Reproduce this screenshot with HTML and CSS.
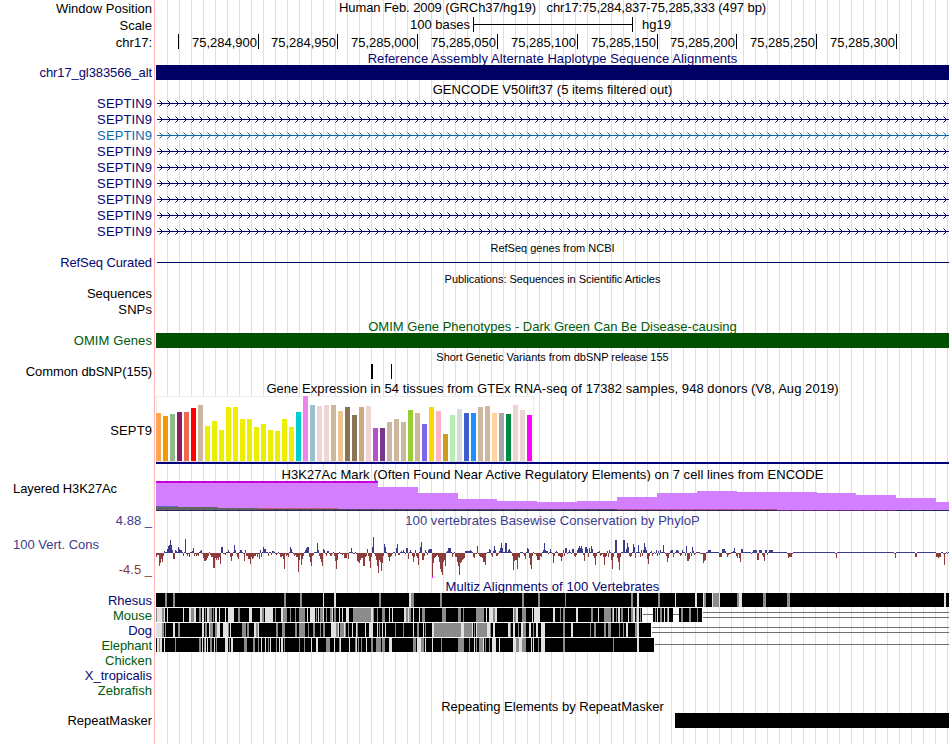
FILE: index.html
```html
<!DOCTYPE html>
<html lang="en">
<head>
<meta charset="utf-8">
<title>Genome Browser chr17:75,284,837-75,285,333</title>
<link rel="stylesheet" href="styles.css">
</head>
<body>
<main class="browser">
  <div class="row h17"><div class="label">Window Position</div><div class="track"><p class="title t-window">Human Feb. 2009 (GRCh37/hg19) &nbsp; chr17:75,284,837-75,285,333 (497 bp)</p></div></div>
  <div class="row h17"><div class="label">Scale</div><div class="track scale"><span class="scale-text">100 bases</span><span class="scale-bar"></span><span class="scale-db">hg19</span></div></div>
  <div class="row h17"><div class="label">chr17:</div><div class="track ruler"><span></span><span>75,284,900</span><span>75,284,950</span><span>75,285,000</span><span>75,285,050</span><span>75,285,100</span><span>75,285,150</span><span>75,285,200</span><span>75,285,250</span><span>75,285,300</span></div></div>

  <div class="row h14"><div class="label"></div><div class="track"><p class="title navy t-alt">Reference Assembly Alternate Haplotype Sequence Alignments</p></div></div>
  <div class="row h15"><div class="label navy tight">chr17_gl383566_alt</div><div class="track"><div class="bar bar-navy"></div></div></div>

  <div class="row h15"><div class="label"></div><div class="track"><p class="title low t-gencode">GENCODE V50lift37 (5 items filtered out)</p></div></div>
  <div class="row h16"><div class="label navy wide">SEPTIN9</div><div class="track gene navy"></div></div>
  <div class="row h16"><div class="label navy wide">SEPTIN9</div><div class="track gene navy"></div></div>
  <div class="row h16"><div class="label teal wide">SEPTIN9</div><div class="track gene teal"></div></div>
  <div class="row h16"><div class="label navy wide">SEPTIN9</div><div class="track gene navy"></div></div>
  <div class="row h16"><div class="label navy wide">SEPTIN9</div><div class="track gene navy"></div></div>
  <div class="row h16"><div class="label navy wide">SEPTIN9</div><div class="track gene navy"></div></div>
  <div class="row h16"><div class="label navy wide">SEPTIN9</div><div class="track gene navy"></div></div>
  <div class="row h16"><div class="label navy wide">SEPTIN9</div><div class="track gene navy"></div></div>
  <div class="row h16"><div class="label navy wide">SEPTIN9</div><div class="track gene navy"></div></div>

  <div class="row h15"><div class="label"></div><div class="track"><p class="title small low t-refseq">RefSeq genes from NCBI</p></div></div>
  <div class="row h16"><div class="label navy tight">RefSeq Curated</div><div class="track"><div class="line"></div></div></div>
  <div class="row h15"><div class="label"></div><div class="track"><p class="title small low t-pubs">Publications: Sequences in Scientific Articles</p></div></div>
  <div class="row h16"><div class="label">Sequences</div><div class="track"></div></div>
  <div class="row h16"><div class="label wide">SNPs</div><div class="track"></div></div>
  <div class="row h16"><div class="label"></div><div class="track"><p class="title green low t-omim">OMIM Gene Phenotypes - Dark Green Can Be Disease-causing</p></div></div>
  <div class="row h15"><div class="label green wide">OMIM Genes</div><div class="track"><div class="bar bar-green"></div></div></div>
  <div class="row h15"><div class="label"></div><div class="track"><p class="title small low t-snp">Short Genetic Variants from dbSNP release 155</p></div></div>
  <div class="row h16"><div class="label tight">Common dbSNP(155)</div><div class="track" id="snp"></div></div>
  <div class="row h17"><div class="label"></div><div class="track"><p class="title low t-gtex">Gene Expression in 54 tissues from GTEx RNA-seq of 17382 samples, 948 donors (V8, Aug 2019)</p></div></div>
  <div class="row h69"><div class="label wide">SEPT9</div><div class="track" id="gtex"></div></div>
  <div class="row h16"><div class="label"></div><div class="track"><p class="title low t-h3k">H3K27Ac Mark (Often Found Near Active Regulatory Elements) on 7 cell lines from ENCODE</p></div></div>
  <div class="row h30"><div class="label left top tight">Layered H3K27Ac</div><div class="track" id="h3k"></div></div>
  <div class="row h18"><div class="label slate">4.88 _</div><div class="track"><p class="title slate low t-phylop">100 vertebrates Basewise Conservation by PhyloP</p></div></div>
  <div class="row h49"><div class="label cons"><span class="slate">100 Vert. Cons</span><span class="brick">-4.5 _</span></div><div class="track" id="cons"></div></div>
  <div class="row h15"><div class="label"></div><div class="track"><p class="title navy low1 t-multiz">Multiz Alignments of 100 Vertebrates</p></div></div>
  <div class="row h15"><div class="label navy">Rhesus</div><div class="track" id="rhesus"></div></div>
  <div class="row h15"><div class="label green">Mouse</div><div class="track" id="mouse"></div></div>
  <div class="row h15"><div class="label navy">Dog</div><div class="track" id="dog"></div></div>
  <div class="row h15"><div class="label green tight">Elephant</div><div class="track" id="elephant"></div></div>
  <div class="row h15"><div class="label green">Chicken</div><div class="track"></div></div>
  <div class="row h15"><div class="label navy">X_tropicalis</div><div class="track"></div></div>
  <div class="row h15"><div class="label green">Zebrafish</div><div class="track"></div></div>
  <div class="row h15"><div class="label"></div><div class="track"><p class="title low1 t-repeat">Repeating Elements by RepeatMasker</p></div></div>
  <div class="row h15"><div class="label">RepeatMasker</div><div class="track"><div class="bar bar-repeat"></div></div></div>
  <div class="row h16"><div class="label"></div><div class="track"></div></div>
</main>
<script src="tracks.js"></script>
</body>
</html>
```
FILE: styles.css
```css
* { box-sizing: border-box; }
body { margin: 0; background: #fff; color: #000; font: 13px/15px "Liberation Sans", Arial, sans-serif; overflow: hidden; }
.browser { width: 949px; height: 744px; overflow: hidden; }
.row { display: grid; grid-template-columns: 154px 795px; }
.h14 { height: 14px; } .h15 { height: 15px; } .h16 { height: 16px; } .h17 { height: 17px; } .h18 { height: 18px; }
.h30 { height: 30px; } .h49 { height: 49px; } .h69 { height: 69px; }
.label { display: flex; align-items: center; justify-content: flex-end; padding-right: 2px; white-space: nowrap; min-height: 0; }
.label.left { justify-content: flex-start; padding-left: 13px; }
.label.top { align-items: flex-start; }
.label.cons { flex-direction: column; align-items: stretch; padding: 8px 2px 0 13px; gap: 10px; justify-content: flex-start; }
.label.cons .brick { text-align: right; }
.tight { letter-spacing: -.1px; }
.wide { letter-spacing: .1px; }
.track {
  min-height: 0; border-left: 1px solid #ffb4b4; padding-left: 1px;
  background: linear-gradient(to right, #dcdcf8 1px, transparent 1px) 11px 0 / 12px 100% content-box;
}
.track svg { display: block; shape-rendering: crispEdges; }
.title { margin: 0; text-align: center; white-space: nowrap; }
.low { padding-top: 2px; }
.low1 { padding-top: 1px; }
.small { font-size: 11px; }
.t-window { letter-spacing: -.085px; }
.t-alt { letter-spacing: .07px; }
.t-gencode { letter-spacing: .03px; }
.t-pubs { letter-spacing: -.04px; }
.t-snp { letter-spacing: -.02px; }
.t-gtex { letter-spacing: .055px; }
.t-h3k { letter-spacing: .05px; }
.t-phylop { letter-spacing: .05px; }
.t-multiz { letter-spacing: .08px; }
.navy { color: #06066e; }
.teal { color: #0c6aaa; }
.green { color: #005a0a; }
.slate { color: #3c3c8c; }
.brick { color: #8c3c3c; }
.bar { height: 15px; }
.bar-navy { background: #000064; }
.bar-green { background: #005000; }
.bar-repeat { background: #000; margin-left: 519px; }
.line { height: 1px; margin: 8px 0 0 1px; background: #000064; }
.scale { display: flex; }
.scale-text { width: 314px; text-align: right; }
.scale-bar { width: 160px; height: 15px; margin-left: 3px; border: solid #000; border-width: 0 1px; background: linear-gradient(#000, #000) 0 7px / 100% 1px no-repeat; }
.scale-db { margin-left: 9px; }
.ruler { display: grid; grid-template-columns: 23px 80px 79px 80px 80px 80px 80px 79px 80px 80px; }
.ruler span { height: 15px; border-right: 1px solid #000; padding-right: 1px; text-align: right; line-height: 18px; }
```
FILE: tracks.js
```javascript
const X0 = 156, W = 793;
const rect = (x, y, w, h, c) => `<rect x="${x - X0}" y="${y}" width="${w}" height="${h}" fill="${c}"/>`;
const draw = (el, h, body) => { el.innerHTML = `<svg width="${W}" height="${h}" viewBox="0 0 ${W} ${h}">${body}</svg>`; };
const byId = id => document.getElementById(id);

// Intron lines with strand chevrons
document.querySelectorAll('.gene').forEach(el => {
  let s = rect(157, 8, 792, 1, 'currentColor');
  for (let x = 161; x < 949; x += 8) {
    s += rect(x, 7, 1, 3, 'currentColor') + rect(x - 1, 6, 1, 1, 'currentColor') + rect(x - 1, 10, 1, 1, 'currentColor');
    s += `<g opacity=".55">${rect(x - 2, 5, 1, 1, 'currentColor')}${rect(x - 2, 11, 1, 1, 'currentColor')}</g>`;
  }
  draw(el, 16, s);
});

// Common variants
draw(byId('snp'), 16, rect(371, 1, 2, 15, '#000') + rect(391, 1, 1, 15, '#000'));

// Tissue expression
const Y = Array(13).fill('eeee00');
const colors = ['ffa54f', 'ee9a00', '8fbc8f', '8b1c62', 'ee6a50', 'ff0000', 'cdb79e', ...Y, '00cdcd', 'ee82ee', '9ac0cd', 'eed5d2', 'eed5d2', 'cdb79e', 'eec591', '8b7355', '8b7355', 'cdaa7d', 'eed5d2', 'b452cd', '7a378b', 'cdb79e', 'cdb79e', 'cdb79e', '9acd32', 'cdb79e', '7a67ee', 'ffd700', 'ffb6c1', 'cd9b1d', 'b4eeb4', 'd9d9d9', '3a5fcd', '1e90ff', 'cdb79e', 'cdb79e', 'ffd39b', 'a6a6a6', '008b45', 'eed5d2', 'eed5d2', 'ff00ff'];
const heights = [48, 45, 47, 49, 49, 53, 56, 35, 40, 31, 54, 54, 42, 42, 34, 37, 31, 30, 42, 34, 49, 65, 56, 55, 56, 56, 50, 54, 46, 54, 55, 33, 33, 39, 42, 39, 51, 48, 37, 54, 50, 27, 46, 52, 48, 48, 54, 55, 48, 48, 47, 56, 51, 46];
draw(byId('gtex'), 69, rect(156, 0, 378, 66, '#eee') + rect(157, 1, 376, 64, '#fff') + rect(156, 65, 378, 1, '#ddd') +
  heights.map((h, i) => rect(156 + i * 7, 65 - h, 5, h, '#' + colors[i])).join('') + rect(156, 66, 793, 2, '#000078'));

// Layered signal: [start, top]
const steps = [[156, 0], [378, 6], [418, 12], [458, 18], [497, 20], [537, 21], [577, 20], [617, 16], [657, 12], [697, 10], [737, 11], [817, 12], [856, 14], [896, 17], [936, 21], [949, 21]];
let h3k = '';
for (let i = 0; i < steps.length - 1; i++) h3k += rect(steps[i][0], steps[i][1], steps[i + 1][0] - steps[i][0], 30 - steps[i][1], '#d280ff');
h3k += rect(156, 0, 222, 2, '#c800dc') + rect(156, 25, 22, 1, '#5a6ec8') + rect(156, 26, 62, 3, '#646464') + rect(218, 27, 40, 2, '#646464') +
  rect(258, 27, 80, 1, '#c85a78') + rect(258, 28, 359, 1, '#5a465f') + rect(617, 28, 160, 1, '#c0508c') +
  rect(156, 29, 793, 1, '#28285a') + rect(777, 29, 119, 1, '#6e2878');
draw(byId('h3k'), 30, h3k);

// Conservation scores, one value per pixel, keyed by starting x
const scores = {
  156: [-4, -2, -2, -13, -10, -6, -9, -3, 2, 1, 1, 4, 7, 8, 13, 8, 3, -6, -6, 3, 2, 1, 6, 4, 3, 3, 1, -3, 1, 14, -1, -3, -1, -4, 1, 1, 2, 5, -3, -1, -3, -2, -3, 1, 2, 3, -1, -5, -8, -8, -7, -5, -3, 1, -2, -4, -4, -15, -15, -5, -7, -5, -7, -4, -11, 6, 6, -1, -1, -2, 1, 1, 3, 1, -4, -8, -3, 1, 8, 3, -1, -4, -6, 1, 3, 3, 1, -1, -8, 3, -3, -3, -6, -6, -11, -4, -6, -5, -3, -3, -1, -4, -1, -6, 3, -4, 1, 6, 4, 4, 1, 1, -3, 1, 1, -2, 2, 2, 1, -1, -2, -1, 1, -1, -4, -4, -3, -6, -16, -1, -3, -2, -4, 1, 6, 4, 1, -1, -3, -2, -4, -4, -19, -7, -2, -12, -6, -3, 1, 3, 5, 6, 6, -4, -9, -13, -3, -2, 1, 1, 1, 10, 3, -3, -6, -9, -13, 4, 3, -1, -3, 2, 2, -1, -3, -3, -1, 1, -3, -8, -16, -7, -1, 1, -1, -1, -2, -1, -5, -5, -5, -1, -6, 1],
  350: [1, 5, 1, -1, -1, 1, -1, -8, -9, -10, -7, -5, -5, -13, -13, -4, -3, 4, -3, -8, -15, -4, 6, 16, -1, -3, -7, -13, -20, -7, -9, -18, -10, -3, 9, 6, 1, -1, -4, -8, -4, -3, -1, 1, 1, -3, 5, 9, -2, -2, 1, 2, 1, 3, 1, -1, 5, 5, -6, 1, 3, 1, -3, -9, -4, 3, -3, -5, -12, 1, 6, 11, -7, -7, -3, 3, 1, -2, 3, 4, 4, 4, -23, -10, -5, -4, -3, -2, -4, -9, -16, -19, -22, -9, -7, -13, 1, 2, 5, 5, 5, 1, -4, -1, 1, -4, -4, -9, -13, -22, -10, -9, -7, -6, -5, 2, 2, 2, 2, 2, 3, 2, 1, -4, -5, -1, -1, 7, -1, -3, -4, -4, -5, -9, -9, -12, -1, 1, 1, 4, 3, -2, -4, 2, 7, 3, -3, -3, -1, 2, 5, 10, 5, 1, 1, 10, 10, 1, 3, 4, 2, 1, -3, -17, -8, -7, -7, -16, -4, -5, 1, 1, 1, -1, -3, -6, 1, 5, 4, -5, -12, -16, -3, 1, -1, -1, -3, -7, -7, -7, -3, -4, 1, 3, 10, 3, 2, 2, -1, 1],
  550: [4, 1, -1, -10, -3, 1, 2, 1, -3, -3, -4, -8, -4, 3, -3, 5, 5, -1, 1, 3, 1, -1, 4, 4, -3, -4, -2, 3, 5, 7, 5, 7, 4, -2, -8, 6, 6, 4, -4, 5, 1, 7, 4, -3, -5, -12, -3, 1, 1, 2, -3, -2, -1, -4, -12, -4, -3, 2, -4, 3, 1, -7, -16, -4, 1, 13, 13, -5, -9, -17, -4, 1, 1, 13, 13, 1, 4, 10, 6, -3, -4, -3, 1, 9, 6, -5, 1, 1, 8, 1, -4, 3, -3, 3, 10, 6, 3, -6, -11, -3, 1, 2, -3, -1, 1, -1, 3, -3, 2, -2, 3, 1, 1, 8, 1, -1, -3, -9, -5, -1, 2, 3, 3, -4, -1, 1, 3, 3, 2, -1, -3, -2, 3, 1, 1, -3, 7, -8, -8, -6, 1, -3, 6, 2, -2, -1, 1, 1, 1, 1],
  700: [-1, -1, -1, -10, -8, -7, 1, 1, 3, 3, 3, 1, 1, 1, 1, 1, 1, 1, 1, -4, -4, -4, 4, 4, 4, 2, -1, -4, -2, -1, -1, 1, 1, 2, 5, 1, -3, -5, -1, -5, -9, 4, 4, 1, 1, 1, 1, 1, 1, 1, 1, -1, 1, 3, 3, 3, 3, -7, -7, 3, 3, 3, -2, -4, -8, 3, 3, -2, 1, 3, 3, 3, 3],
  787: [-1, -5, -4, -4, -4, -1], 835: [-1, -5], 894: [-1, -5], 915: [-4, -4], 936: [-4, -4, -5, -4, -4], 943: [-1, -12, -1, 1, -1]
};
const px = {};
for (const k in scores) scores[k].forEach((v, i) => { px[+k + i] = v; });
let cons = '';
for (let x = 156; x < 949; x++) {
  const v = px[x] || 1;
  cons += v > 0 ? rect(x, 24 - v, 1, v, '#3c3c8c') : rect(x, 24, 1, -v, '#8c3c3c');
}
draw(byId('cons'), 49, cons + rect(432, 47, 1, 2, '#f0f'));

// Pairwise alignments: g = weak match, l = faint match, as "x:width"
const align = (id, blocks, g, l, lines) => {
  const parse = (str, c) => str.trim().split(/\s+/).map(p => { const [x, w] = p.split(':').map(Number); return rect(x, 0, w || 1, 14, c); }).join('');
  draw(byId(id), 15, blocks.map(b => rect(b[0], 0, b[1] - b[0], 14, '#000')).join('') + parse(l, '#e1e1e1') + parse(g, '#8c8c8c') +
    lines.map(b => rect(b[0], b[2], b[1] - b[0], 1, '#707070')).join(''));
};
align('rhesus', [[156, 949]],
  '165:2 173:2 284:2 300:2 379:2 411:3 440:2 522:2 538:2 565:1 631:2 658:2 704:2 713:6 737:2 763:3 787:3',
  '323:1 334:2 409:2 637:2 675:1 695:2 703:1 712:1 719:1 739:3 944:2', []);
align('mouse', [[156, 642], [653, 673], [679, 702]],
  '156:1 162:2 191:3 199:2 205:1 209:3 213:1 238:2 262:2 275:1 283:4 290:1 295:1 299:6 316:1 320:3 326:1 330:2 334:2 353:18 373:1 377:1 382:3 406:2 409:2 422:3 442:4 458:3 463:1 476:8 493:2 514:2 522:4 560:1 563:2 591:2 604:7 612:1 616:1 621:2 631:2 636:1 640:1 655:1 660:2 667:1 681:2 689:2 697:1',
  '157:5 164:1 167:1 183:1 189:2 194:2 202:2 207:2 215:2 219:1 225:1 228:6 249:3 260:2 265:8 281:2 307:1 310:5 318:1 323:1 332:1 339:1 342:1 346:3 371:2 389:1 392:1 404:2 408:1 413:1 419:1 486:1 489:4 495:2 513:1 516:2 532:1 534:6 553:2 576:2 598:1 613:1 618:2 628:1 633:2 637:2 657:1 664:1 668:1', [[643, 653, 6], [673, 679, 6], [703, 949, 4], [703, 949, 9]]);
align('dog', [[156, 651]],
  '162:2 165:1 178:2 205:2 210:3 215:2 228:1 242:4 247:2 256:2 276:2 282:3 295:2 299:6 308:1 313:2 320:1 323:2 336:2 340:4 345:1 348:1 357:1 379:1 395:1 403:1 417:2 425:1 434:27 464:8 474:1 477:10 490:1 510:1 518:1 523:3 533:1 563:2 590:1 594:2 604:2 608:3 619:1 623:1 635:2',
  '156:6 173:2 202:2 209:1 217:3 223:5 230:1 254:2 258:1 331:5 337:2 344:1 352:1 356:1 365:1 369:4 377:1 382:1 385:1 413:1 423:1 432:2 461:3 472:1 476:1 487:3 493:2 508:2 513:2 521:2 529:2 536:2 541:4 571:2 626:2 637:2', [[652, 949, 4], [652, 949, 9]]);
align('elephant', [[156, 654]],
  '159:1 175:1 199:2 204:1 210:2 216:1 229:1 244:3 253:2 258:1 268:1 276:1 284:1 299:1 304:1 326:4 339:1 355:1 358:1 361:1 371:2 376:5 382:3 413:3 421:3 441:1 458:6 469:1 476:1 479:4 485:1 489:1 516:3 522:4 538:1 563:2 613:1',
  '157:2 160:2 164:1 202:1 205:1 207:1 214:1 225:3 231:2 261:1 265:1 270:1 279:1 281:2 311:1 316:2 334:1 340:1 349:1 366:1 355:2 389:3 417:4 425:1 432:1 474:1 482:2 492:4 499:1 513:3 519:3 531:1 533:1 541:4 637:2', [[655, 949, 6]]);
```
